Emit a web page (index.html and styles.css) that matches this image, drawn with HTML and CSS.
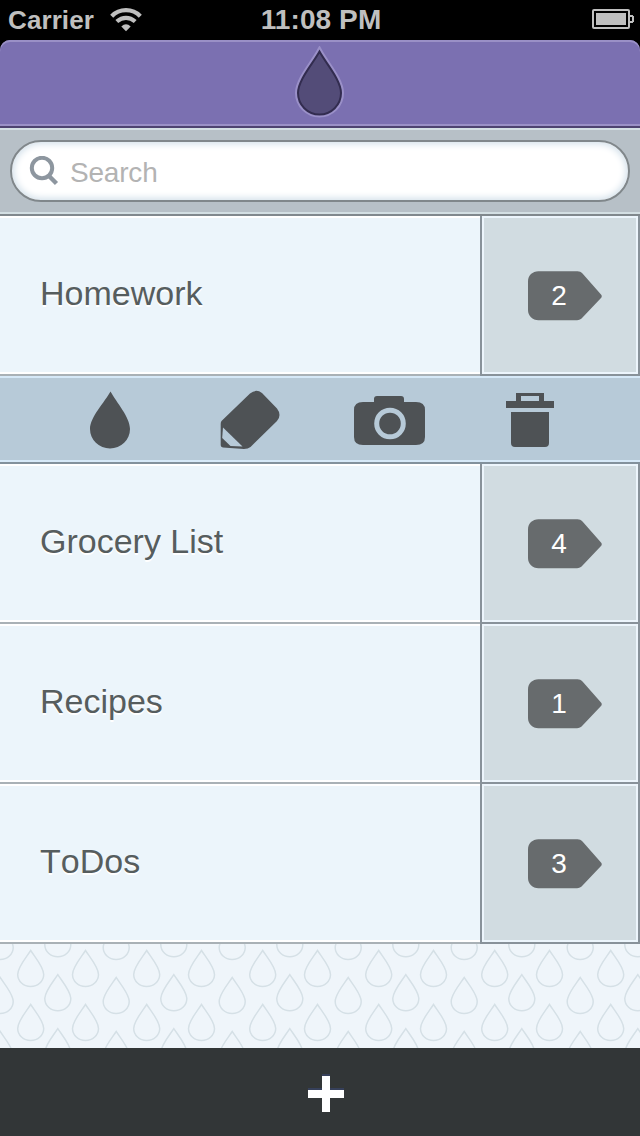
FILE: index.html
```html
<!DOCTYPE html>
<html lang="en">
<head>
<meta charset="utf-8">
<title>Lists</title>
<link rel="stylesheet" href="styles.css">
</head>
<body>
<svg class="defs" width="0" height="0" aria-hidden="true">
  <defs>
    <path id="tag" d="M10.500 0.300H49.500C51.500 0.300 53 1 54.500 2.500L73 23.500Q74.500 25.200 73 27L54.500 46.500C53 48.300 51 49.200 49 49.200H10.500C4.500 49.200 0 45 0 39V10.500C0 4.500 4.500 0.300 10.500 0.300Z" fill="#676b6d"/>
    <path id="outline" d="M0 .5C4.500 7.500 13 17 13 24.500A13 12 0 0 1-13 24.500C-13 17-4.500 7.500 0 .5Z" fill="none" stroke="#d5e0e6" stroke-width="1.500"/>
  </defs>
</svg>
<div class="screen">
  <div class="status">
    <div class="status-left">
      <span class="carrier">Carrier</span>
      <svg class="wifi" width="32" height="24" viewBox="0 0 32 24">
        <g fill="none" stroke="#bfbfbf">
          <path d="M1.700 8.200Q7.500 2.200 16 2.200T30.300 8.200" stroke-width="4.200"/>
          <path d="M6.800 13.500Q11 9.800 16 9.800T25.200 13.500" stroke-width="4.200"/>
        </g>
        <path d="M11.300 18.500Q16 14 20.700 18.500L16 23.200Z" fill="#bfbfbf"/>
      </svg>
    </div>
    <span class="time">11:08 PM</span>
    <svg class="battery" width="42" height="20" viewBox="0 0 42 20">
      <rect x="1" y="1" width="36" height="18" rx="1" fill="none" stroke="#bfbfbf" stroke-width="2"/>
      <path d="M4 4H34V16H4ZM38 6H41V7H42V13H41V14H38V12H40V8H38Z" fill="#bfbfbf"/>
    </svg>
  </div>
  <header class="header">
    <svg width="52" height="74" viewBox="0 0 52 74">
      <path d="M25.500 5.500C32 17.500 47 34 47 47A21.500 21.500 0 0 1 4 47C4 34 19 17.500 25.500 5.500Z" fill="#534c78" stroke="#9a90c8" stroke-width="6"/>
      <path d="M25.500 5.500C32 17.500 47 34 47 47A21.500 21.500 0 0 1 4 47C4 34 19 17.500 25.500 5.500Z" fill="#534c78" stroke="#322c4f" stroke-width="2"/>
    </svg>
  </header>
  <div class="search-bar">
    <div class="search">
      <svg width="30" height="30" viewBox="0 0 30 30" fill="none" stroke="#8d969f">
        <circle cx="13" cy="12" r="10.200" stroke-width="4"/>
        <path d="M19.500 19.500L27.500 27.500" stroke-width="4.500"/>
      </svg>
      <span class="placeholder">Search</span>
    </div>
  </div>
  <div class="row">
    <div class="name">Homework</div>
    <div class="count"><svg class="tag" viewBox="0 0 74 50"><use href="#tag"/></svg><span class="number">2</span></div>
  </div>
  <div class="tools">
    <svg class="tool" width="40" height="58" viewBox="0 0 40 58"><path d="M20.500 .500C26.500 11.500 40 26 40 38A20 19.500 0 0 1 0 38C0 26 14.500 11.500 20.500 .500Z" fill="#4e5255"/></svg>
    <svg class="tool pencil" width="60" height="60" viewBox="0 0 60 60">
      <path d="M1.500 31L30 3.500Q36-1.500 42 3L57 18.500Q62 25 57 31L30.500 57Q28 59 24 59L3 57.500Q.500 57.500.700 55V34Q.700 32 1.500 31Z" fill="#4e5255"/>
      <path d="M3 37.500L22.500 56.500L10.500 56L2.200 48Z" fill="#b7cad8"/>
    </svg>
    <svg class="tool camera" width="72" height="50" viewBox="0 0 72 50">
      <path d="M9 7H20V4Q20 1 23 1H47Q50 1 50 4V7H62Q71 7 71 15V42Q71 50 62 50H9Q0 50 0 42V15Q0 7 9 7Z" fill="#4e5255"/>
      <circle cx="36" cy="28.500" r="13.300" fill="none" stroke="#b7cad8" stroke-width="5"/>
    </svg>
    <svg class="tool" width="48" height="54" viewBox="0 0 48 54"><path fill-rule="evenodd" d="M0 8H10V0H38V8H48V15H0ZM15 3V8H33V3ZM5 19H43V50Q43 54 39 54H9Q5 54 5 50Z" fill="#4e5255"/></svg>
  </div>
  <div class="row">
    <div class="name">Grocery List</div>
    <div class="count"><svg class="tag" viewBox="0 0 74 50"><use href="#tag"/></svg><span class="number">4</span></div>
  </div>
  <div class="row">
    <div class="name">Recipes</div>
    <div class="count"><svg class="tag" viewBox="0 0 74 50"><use href="#tag"/></svg><span class="number">1</span></div>
  </div>
  <div class="row">
    <div class="name todos">ToDos</div>
    <div class="count"><svg class="tag" viewBox="0 0 74 50"><use href="#tag"/></svg><span class="number">3</span></div>
  </div>
  <svg class="drops" width="640" height="104" viewBox="0 0 640 104">
    <defs>
      <pattern id="drops" width="116" height="54" patternUnits="userSpaceOnUse">
        <use href="#outline" x="30.700" y="6"/>
        <use href="#outline" x="85.500" y="6"/>
        <use href="#outline" x="57.800" y="30.200"/>
        <use href="#outline" x="57.800" y="-23.800"/>
        <use href="#outline" x="0.200" y="33"/>
        <use href="#outline" x="0.200" y="-21"/>
        <use href="#outline" x="116.200" y="33"/>
        <use href="#outline" x="116.200" y="-21"/>
      </pattern>
    </defs>
    <rect width="640" height="104" fill="url(#drops)"/>
  </svg>
  <footer class="footer">
    <svg width="36" height="38" viewBox="0 0 36 38"><path d="M14 0H22V14H36V22H0V14H14Z" fill="#36405a"/><path d="M14 2H22V16H36V24H22V38H14V24H0V16H14Z" fill="#fff"/></svg>
  </footer>
</div>
</body>
</html>
```
FILE: styles.css
```css
* { box-sizing: border-box; }
body { margin: 0; background: #000; font-family: "Liberation Sans", Arial, sans-serif; }
svg { display: block; flex: none; }
.defs { position: absolute; }
.screen { width: 640px; height: 1136px; overflow: hidden; display: flex; flex-direction: column; }
.screen > * { flex: none; }
.status {
  height: 40px; padding: 0 6px 0 8px; display: grid;
  grid-template-columns: 1fr auto 1fr; align-items: center;
  color: #bfbfbf; font-weight: bold; font-size: 28px; line-height: 40px;
}
.status-left { display: flex; align-items: center; }
.carrier { width: 102px; font-size: 26px; letter-spacing: .1px; }
.time { letter-spacing: .1px; }
.battery { justify-self: end; margin-bottom: 2px; }
.header {
  height: 88px; background: #7b70b1; border-radius: 10px 10px 0 0;
  box-shadow: inset 0 2px #9a90c6, inset 0 -2px #4d4370, inset 0 -4px #9a90c6;
  display: flex; justify-content: center; padding-top: 6px;
}
.search-bar {
  height: 88px; padding: 12px 10px 14px; background: #b7c0c7;
  box-shadow: inset 0 2px #d3dfe3, inset 0 -2px #80888d, inset 0 -4px #d3dfe3;
}
.search {
  height: 62px; border: 2px solid #80878b; border-radius: 31px; background: #fff;
  box-shadow: inset 0 0 7px 2px #d3e0ea;
  display: flex; align-items: center; gap: 11px; padding-left: 17px;
}
.placeholder { font-size: 28px; line-height: 32px; color: #b3b3b3; padding-top: 3px; letter-spacing: -.2px; }
.row { height: 160px; display: flex; }
.name {
  width: 480px; padding: 0 40px 4px; background: #ecf5fb;
  border-bottom: 2px solid #a9b1b6; box-shadow: inset 0 2px #fff, inset 0 -2px #fff;
  display: flex; align-items: center;
  color: #565d5e; font-size: 34px; line-height: 40px; text-shadow: 0 2px #fff;
}
.todos { font-kerning: none; }
.count {
  width: 160px; border: solid #88929a; border-width: 0 2px 2px;
  background: #d1dce1; box-shadow: inset 0 0 0 2px #ecf5fc;
  display: grid; padding: 55px 0 0 46px; align-content: start;
}
.tag { width: 74px; height: 50px; grid-area: 1 / 1; }
.number { grid-area: 1 / 1; width: 62px; text-align: center; color: #fff; font-size: 28px; line-height: 50px; }
.tools {
  height: 88px; background: #b7cad8; padding: 2px 86px 2px 90px;
  box-shadow: inset 0 2px #d6e9f8, inset 0 -2px #82919c, inset 0 -4px #d6e9f8;
  display: flex; align-items: center;
}
.pencil { margin-left: 90px; }
.camera { margin: 0 80px 0 74px; }
.drops { background: #eff5fa; }
.footer { height: 88px; background: #323637; display: flex; justify-content: center; padding: 26px 0 0 12px; }
```
